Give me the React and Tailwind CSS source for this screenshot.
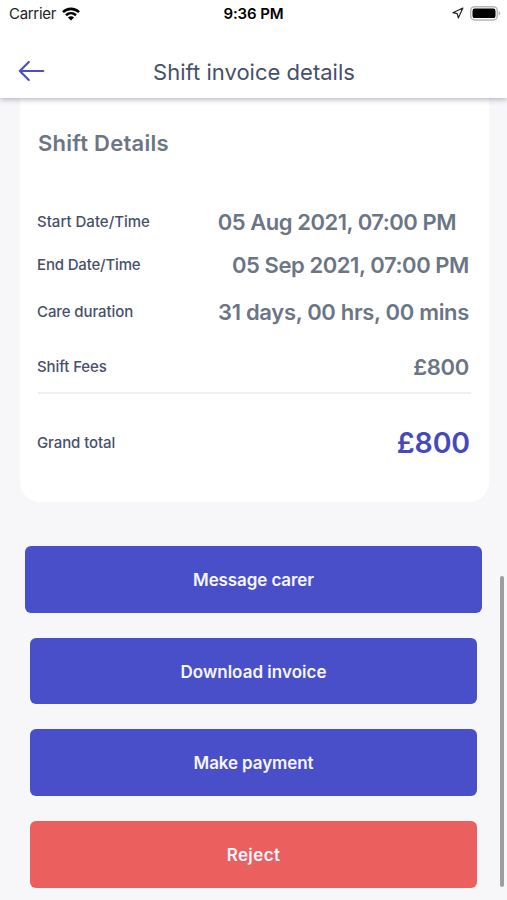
import React from "react";

const shiftRows = [
  {
    label: "Start Date/Time",
    value: "05 Aug 2021, 07:00 PM",
    row: "h-[42px]",
    labelClass: "tracking-[0px]",
    valueClass: "pr-[13px] tracking-[-0.47px]",
  },
  {
    label: "End Date/Time",
    value: "05 Sep 2021, 07:00 PM",
    row: "h-[44px]",
    labelClass: "tracking-[-0.17px]",
    valueClass: "tracking-[-0.42px]",
  },
  {
    label: "Care duration",
    value: "31 days, 00 hrs, 00 mins",
    row: "h-[50px]",
    labelClass: "tracking-[-0.1px]",
    valueClass: "tracking-[-0.32px]",
  },
  {
    label: "Shift Fees",
    value: "£800",
    row: "h-[61px]",
    labelClass: "tracking-[-0.1px]",
    valueClass: "tracking-[-0.3px]",
  },
];

const actions = [
  { label: "Message carer", box: "mx-[25px] bg-[#494fc8]", text: "tracking-[-0.1px]" },
  { label: "Download invoice", box: "mx-[30px] bg-[#494fc8]", text: "tracking-[0.02px]" },
  { label: "Make payment", box: "mx-[30px] bg-[#494fc8]", text: "tracking-[-0.1px]" },
  { label: "Reject", box: "mx-[30px] bg-[#eb5f5e]", text: "tracking-[0.4px]" },
];

const WifiIcon = () => (
  <svg width="18" height="14" viewBox="0 0 18 14" fill="none" stroke="#000" strokeWidth="2.6">
    <path d="M1 5.1C5.5.8 12.5.8 17 5.1" />
    <path d="M4 8.3c2.900-2.700 7.100-2.700 10 0" />
    <path d="M9 13.6 5.9 10.5c1.800-1.600 4.400-1.600 6.200 0z" fill="#000" stroke="none" />
  </svg>
);

const LocationIcon = () => (
  <svg width="12" height="12" viewBox="0 0 12 12" fill="none" stroke="#222" strokeWidth="1.2" strokeLinejoin="round">
    <path d="M10.900 1 .9 5.700l4.300.9 1.100 4.300z" />
  </svg>
);

const BatteryIcon = () => (
  <svg width="31" height="15" viewBox="0 0 31 15">
    <rect x=".7" y=".7" width="26.6" height="13.2" rx="4" fill="#fff" stroke="#b5b5b5" strokeWidth="1.5" />
    <rect x="2.5" y="2.5" width="23" height="9.6" rx="2.2" fill="#000" />
    <path d="M28.700 5v4.600c1-.4 1.600-1.300 1.600-2.300S29.700 5.400 28.700 5z" fill="#b5b5b5" />
  </svg>
);

const StatusBar = () => (
  <div className="grid h-7 grid-cols-3 items-center text-[15px] leading-none text-black">
    <div className="flex items-center gap-[6px] pb-px pl-[9px]">
      <span className="tracking-[-0.3px] text-[#222]">Carrier</span>
      <WifiIcon />
    </div>
    <span className="pb-px text-center font-semibold tracking-[-0.1px]">9:36 PM</span>
    <div className="flex items-center justify-end gap-[6px] pr-[6px] pb-[2px]">
      <LocationIcon />
      <BatteryIcon />
    </div>
  </div>
);

const Header = () => (
  <header className="relative z-10 h-[98px] shrink-0 bg-white shadow-[0_1px_6px_rgba(40,45,70,0.4)]">
    <StatusBar />
    <div className="grid h-[70px] grid-cols-[60px_1fr_60px] items-center">
      <button className="pt-4 pl-[18px]" aria-label="Back">
        <svg width="27" height="20" viewBox="0 0 27 20" fill="none" stroke="#4a4fc4" strokeWidth="2.1" strokeLinecap="round" strokeLinejoin="round">
          <path d="M25.300 10H1.800M10.800 1 1.800 10l9 9" />
        </svg>
      </button>
      <h1 className="pt-[18px] pl-px text-center text-[22px] leading-7 tracking-[0.02px] text-[#47506a]">
        Shift invoice details
      </h1>
    </div>
  </header>
);

const ShiftCard = () => (
  <section className="mr-[18px] ml-5 h-[404px] rounded-b-[20px] bg-white pt-[31px] pr-[18px] pl-[18px]">
    <h2 className="text-[22px] font-semibold leading-7 tracking-[0.25px] text-[#6b7585]">Shift Details</h2>
    <div className="mt-11">
      {shiftRows.map((item) => (
        <div key={item.label} className={`flex items-center justify-between pr-[2px] whitespace-nowrap ${item.row}`}>
          <span className={`-ml-px text-[15px] font-medium text-[#47506a] ${item.labelClass}`}>{item.label}</span>
          <span className={`text-[22px] font-semibold text-[#6b7585] ${item.valueClass}`}>{item.value}</span>
        </div>
      ))}
    </div>
    <div className="-mt-[6px] h-[2px] bg-[#eeeff1]" />
    <div className="flex h-[98px] items-center justify-between pr-px">
      <span className="-ml-px text-[15px] font-medium tracking-[-0.1px] text-[#47506a]">Grand total</span>
      <span className="text-[28.500px] font-semibold tracking-[-0.15px] text-[#4549bd]">£800</span>
    </div>
  </section>
);

export default function App() {
  return (
    <div className="relative flex h-[900px] w-[507px] flex-col overflow-hidden bg-[#f7f7fa] font-['Inter',sans-serif]">
      <Header />
      <ShiftCard />
      <div className="mt-11 flex flex-col gap-[25px]">
        {actions.map((action) => (
          <button
            key={action.label}
            className={`h-[66.700px] shrink-0 rounded-[6px] pt-[3px] text-[17px] font-semibold text-[#f5f6ff] ${action.box}`}
          >
            <span className={action.text}>{action.label}</span>
          </button>
        ))}
      </div>
      {/* scroll indicator */}
      <div className="absolute top-[576px] right-[3px] h-[311px] w-[4px] rounded-full bg-[#9d9da0]" />
    </div>
  );
}
